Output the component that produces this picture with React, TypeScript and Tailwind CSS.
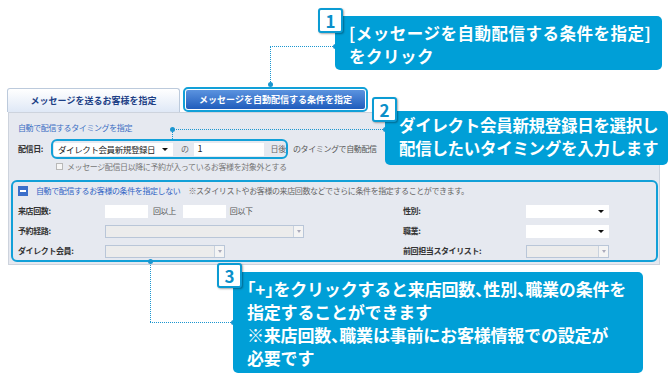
import type { ReactNode } from 'react';

const JP = "font-['Noto_Sans_CJK_JP','Noto_Sans',sans-serif]";

function Badge({ n, className }: { n: string; className: string }) {
  return (
    <div
      className={`absolute flex h-[25px] w-[25px] items-center justify-center rounded-[3px] border-2 border-[#0b9bd3] bg-white text-[17px] font-bold leading-none text-[#0a8fc9] shadow-[1px_1px_2px_rgba(0,0,0,0.35)] ${className}`}
    >
      {n}
    </div>
  );
}

function Callout({ className, children }: { className: string; children: ReactNode }) {
  return (
    <div
      className={`absolute whitespace-nowrap rounded-[5px] bg-[#009fd7] pl-[14px] font-bold leading-[23px] text-white ${className}`}
    >
      {children}
    </div>
  );
}

function Dot({ className }: { className: string }) {
  return <span className={`absolute h-[5px] w-[5px] rounded-full bg-[#1b96d0] ${className}`} />;
}

function Select({ w, disabled, label }: { w: string; disabled?: boolean; label?: string }) {
  if (disabled) {
    return (
      <div className={`flex h-[13px] items-stretch border border-[#b9c6d8] bg-[#ececec] ${w}`}>
        <div className="flex-1" />
        <div className="flex w-[10px] items-center justify-center border-l border-[#c9d2de] bg-[#f4f4f4]">
          <span className="h-0 w-0 border-x-[2.5px] border-t-[3px] border-x-transparent border-t-[#aab]" />
        </div>
      </div>
    );
  }
  return (
    <div className={`flex h-[13px] items-center bg-white pl-[4px] pr-[5px] ${w}`}>
      <span className="flex-1 whitespace-nowrap text-[8.5px] tracking-[-0.4px] text-[#222]">{label}</span>
      <span className="h-0 w-0 border-x-[3px] border-t-[3px] border-x-transparent border-t-[#111]" />
    </div>
  );
}

export default function App() {
  return (
    <div className={`relative h-[381px] w-[670px] overflow-hidden bg-white ${JP}`}>
      {/* form */}
      <div className="w-[661px] pl-[7px] pt-[88px] text-[8px] tracking-[-0.4px] text-[#333]">
        <div className="flex h-[24px] items-end gap-[3px]">
          <div className="flex h-[24px] w-[173px] items-center justify-center rounded-t-[3px] border border-b-0 border-[#bccadc] bg-gradient-to-b from-white to-[#dfe8f6] text-[9px] font-bold tracking-normal text-[#1d3f86]">
            メッセージを送るお客様を指定
          </div>
          <div className="h-[25px] w-[185px] rounded-[5px] border-2 border-[#12a0d8] p-[1px]">
            <div className="flex h-full items-center justify-center rounded-[2px] bg-gradient-to-b from-[#5b93df] to-[#1f5cbc] text-[9px] font-bold tracking-normal text-white">
              メッセージを自動配信する条件を指定
            </div>
          </div>
        </div>

        <div className="ml-[1px] h-[153px] w-[652px] border border-[#cdd3dd] bg-[#e6e9f0] px-[1px] pt-[9px]">
          <div className="pl-[8px]">
            <div className="h-[12px] leading-[12px] text-[#3a6ec3]">自動で配信するタイミングを指定</div>
            <div className="mt-[5px] flex h-[20px] items-center">
              <span className="w-[33px] font-bold">配信日:</span>
              <div className="flex h-[20px] w-[237px] items-center rounded-[6px] border-2 border-[#12a0d8] pl-[1px]">
                <Select w="w-[119px]" label="ダイレクト会員新規登録日" />
                <span className="ml-[8px] text-[#666]">の</span>
                <div className="ml-[5px] flex h-[13px] w-[70px] items-center bg-white pl-[4px] text-[9px] text-[#222]">1</div>
                <span className="ml-[7px] text-[#666]">日後</span>
              </div>
              <span className="ml-[5px] text-[#555]">のタイミングで自動配信</span>
            </div>
            <div className="mt-[3px] flex h-[9px] items-center pl-[38px] text-[#777]">
              <span className="mr-[4px] h-[7px] w-[7px] border border-[#b8b8b8] bg-[#f6f6f6]" />
              メッセージ配信日以降に予約が入っているお客様を対象外とする
            </div>
          </div>

          <div className="ml-[1px] mt-[9px] h-[82px] w-[647px] rounded-[6px] border-2 border-[#12a0d8] pl-[5px] pt-[3px]">
            <div className="flex h-[12px] items-center">
              <span className="flex h-[10px] w-[10px] items-center justify-center bg-[#3b6fca]">
                <span className="h-[2px] w-[6px] bg-white" />
              </span>
              <span className="ml-[8px] text-[#2f63c4]">自動で配信するお客様の条件を指定しない</span>
              <span className="ml-[8px] text-[#666]">※スタイリストやお客様の来店回数などでさらに条件を指定することができます。</span>
            </div>
            <div className="mt-[4px] grid grid-cols-[87px_298px_123px_83px] grid-rows-[20px_20px_20px] items-center font-bold">
              <span>来店回数:</span>
              <div className="flex items-center font-normal text-[#555]">
                <span className="h-[13px] w-[43px] bg-white" />
                <span className="ml-[5px]">回以上</span>
                <span className="ml-[7px] h-[13px] w-[43px] bg-white" />
                <span className="ml-[4px]">回以下</span>
              </div>
              <span>性別:</span>
              <Select w="w-[83px]" />

              <span>予約経路:</span>
              <Select w="w-[199px]" disabled />
              <span>職業:</span>
              <Select w="w-[83px]" />

              <span>ダイレクト会員:</span>
              <Select w="w-[120px]" disabled />
              <span>前回担当スタイリスト:</span>
              <Select w="w-[83px]" disabled />
            </div>
          </div>
        </div>
      </div>

      {/* callout 1 */}
      <span className="absolute left-[270px] top-[46px] h-[38px] border-l border-dotted border-[#1b96d0]" />
      <span className="absolute left-[270px] top-[46px] w-[65px] border-t border-dotted border-[#1b96d0]" />
      <Dot className="left-[268px] top-[82px]" />
      <Dot className="left-[333px] top-[44px]" />
      <Callout className="left-[335px] top-[16px] h-[54px] w-[327px] pt-[6px] text-[16.5px] tracking-[0.5px]">
        [メッセージを自動配信する条件を指定]
        <br />
        をクリック
      </Callout>
      <Badge n="1" className="left-[318px] top-[8px]" />

      {/* callout 2 */}
      <span className="absolute left-[172px] top-[129px] h-[10px] border-l border-dotted border-[#1b96d0]" />
      <span className="absolute left-[172px] top-[129px] w-[213px] border-t border-dotted border-[#1b96d0]" />
      <Dot className="left-[170px] top-[127px]" />
      <Dot className="left-[383px] top-[127px]" />
      <Callout className="left-[385px] top-[111px] h-[54px] w-[283px] pt-[3px] text-[16.5px] tracking-[-0.3px]">
        ダイレクト会員新規登録日を選択し
        <br />
        配信したいタイミングを入力します
      </Callout>
      <Badge n="2" className="left-[372px] top-[97px]" />

      {/* callout 3 */}
      <span className="absolute left-[150px] top-[261px] h-[61px] border-l border-dotted border-[#1b96d0]" />
      <span className="absolute left-[150px] top-[322px] w-[83px] border-t border-dotted border-[#1b96d0]" />
      <Dot className="left-[148px] top-[259px]" />
      <Dot className="left-[231px] top-[320px]" />
      <Callout className="left-[233px] top-[272px] h-[101px] w-[410px] pt-[5px] text-[17px] tracking-[-0.2px] [font-feature-settings:'halt']">
        「+」をクリックすると来店回数、性別、職業の条件を
        <br />
        指定することができます
        <br />
        ※来店回数、職業は事前にお客様情報での設定が
        <br />
        必要です
      </Callout>
      <Badge n="3" className="left-[217px] top-[263px]" />
    </div>
  );
}
